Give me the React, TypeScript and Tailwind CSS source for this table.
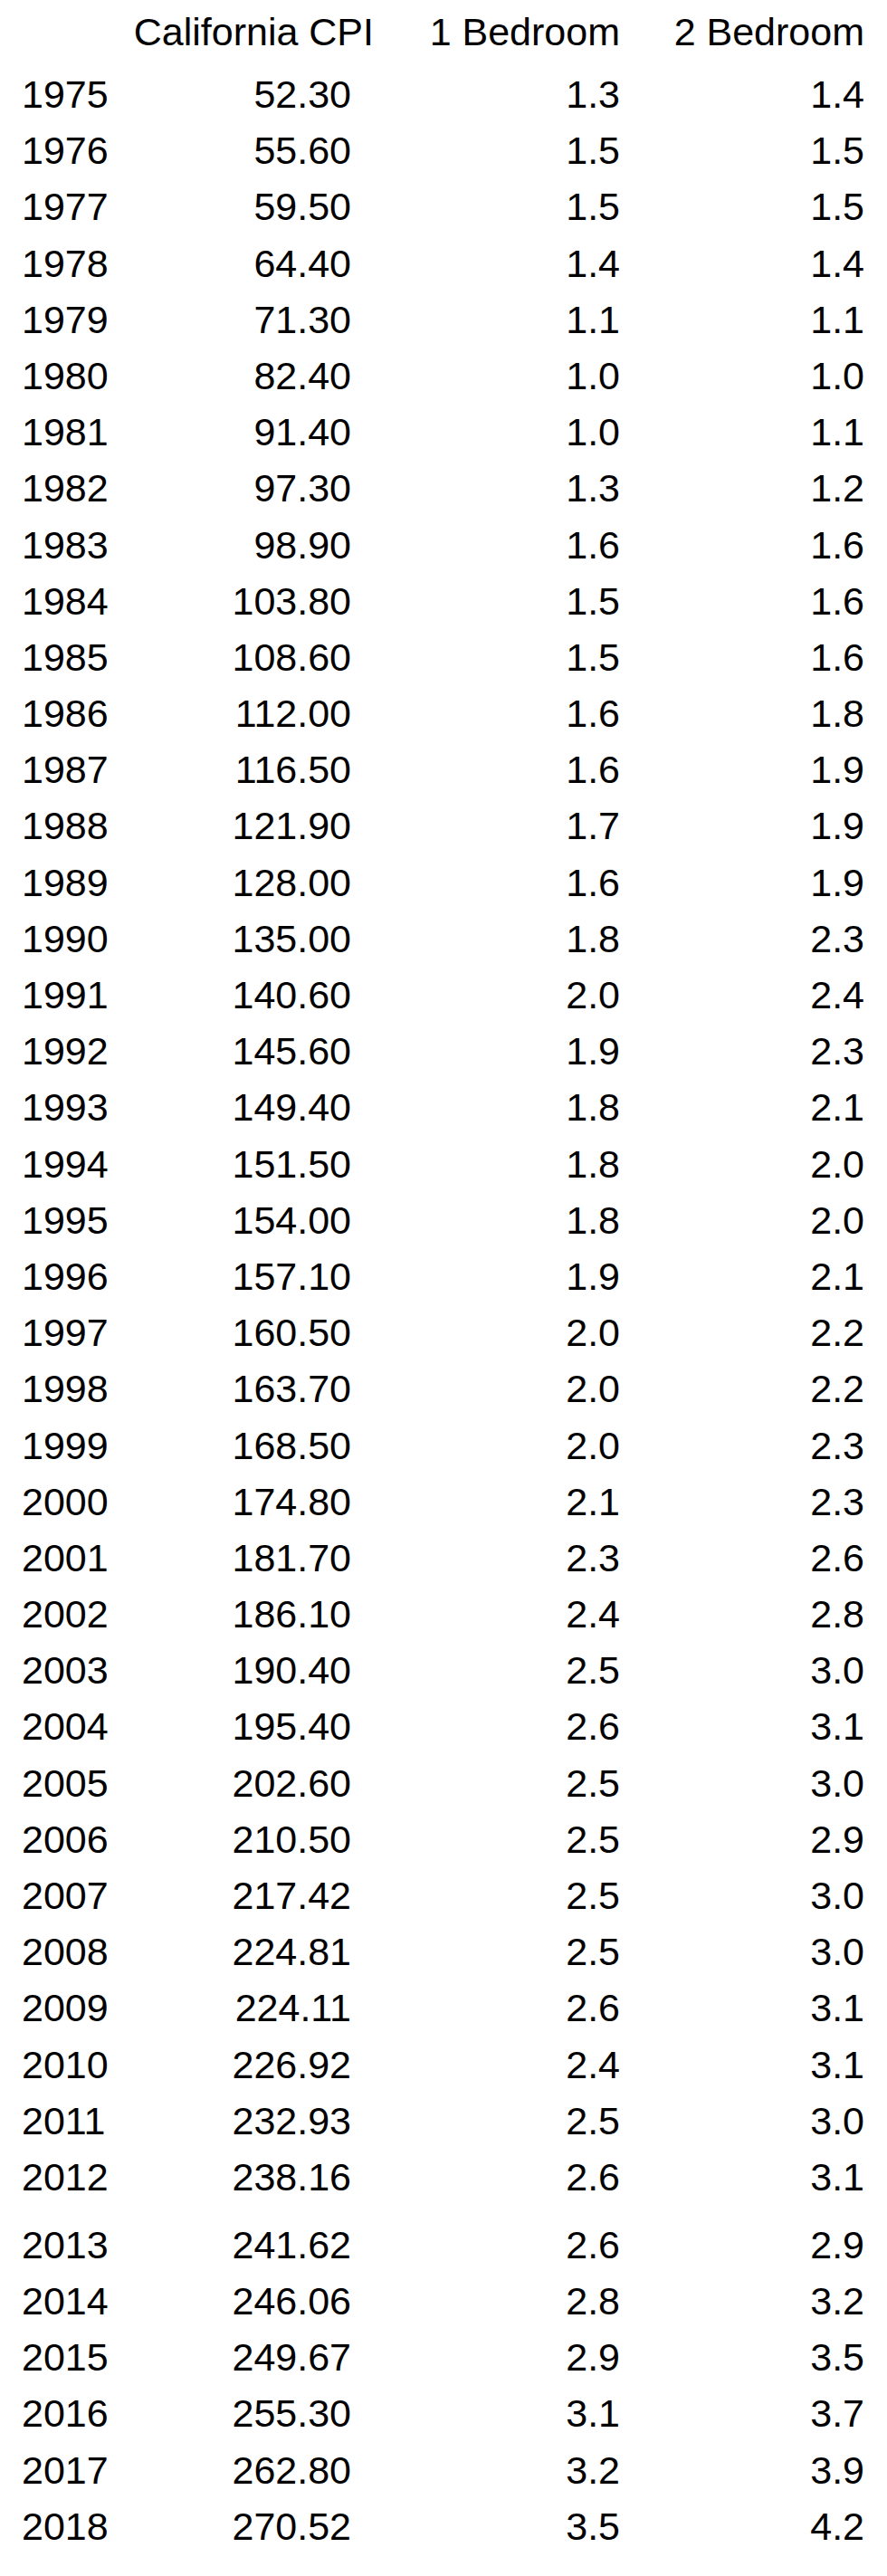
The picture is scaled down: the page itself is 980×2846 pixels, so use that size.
const rows: [string, string, string, string][] = [
  ["1975", "52.30", "1.3", "1.4"],
  ["1976", "55.60", "1.5", "1.5"],
  ["1977", "59.50", "1.5", "1.5"],
  ["1978", "64.40", "1.4", "1.4"],
  ["1979", "71.30", "1.1", "1.1"],
  ["1980", "82.40", "1.0", "1.0"],
  ["1981", "91.40", "1.0", "1.1"],
  ["1982", "97.30", "1.3", "1.2"],
  ["1983", "98.90", "1.6", "1.6"],
  ["1984", "103.80", "1.5", "1.6"],
  ["1985", "108.60", "1.5", "1.6"],
  ["1986", "112.00", "1.6", "1.8"],
  ["1987", "116.50", "1.6", "1.9"],
  ["1988", "121.90", "1.7", "1.9"],
  ["1989", "128.00", "1.6", "1.9"],
  ["1990", "135.00", "1.8", "2.3"],
  ["1991", "140.60", "2.0", "2.4"],
  ["1992", "145.60", "1.9", "2.3"],
  ["1993", "149.40", "1.8", "2.1"],
  ["1994", "151.50", "1.8", "2.0"],
  ["1995", "154.00", "1.8", "2.0"],
  ["1996", "157.10", "1.9", "2.1"],
  ["1997", "160.50", "2.0", "2.2"],
  ["1998", "163.70", "2.0", "2.2"],
  ["1999", "168.50", "2.0", "2.3"],
  ["2000", "174.80", "2.1", "2.3"],
  ["2001", "181.70", "2.3", "2.6"],
  ["2002", "186.10", "2.4", "2.8"],
  ["2003", "190.40", "2.5", "3.0"],
  ["2004", "195.40", "2.6", "3.1"],
  ["2005", "202.60", "2.5", "3.0"],
  ["2006", "210.50", "2.5", "2.9"],
  ["2007", "217.42", "2.5", "3.0"],
  ["2008", "224.81", "2.5", "3.0"],
  ["2009", "224.11", "2.6", "3.1"],
  ["2010", "226.92", "2.4", "3.1"],
  ["2011", "232.93", "2.5", "3.0"],
  ["2012", "238.16", "2.6", "3.1"],
  ["2013", "241.62", "2.6", "2.9"],
  ["2014", "246.06", "2.8", "3.2"],
  ["2015", "249.67", "2.9", "3.5"],
  ["2016", "255.30", "3.1", "3.7"],
  ["2017", "262.80", "3.2", "3.9"],
  ["2018", "270.52", "3.5", "4.2"],
];

const cols = "grid grid-cols-[120px_244px_297px_270px]";

const App = () => {
  return (
    <div
      className="min-h-[2846px] w-[980px] bg-white pl-[24px] pt-[4px] text-[43px] text-black"
      style={{ fontFamily: '"Liberation Sans", Arial, sans-serif' }}
    >
      <div className={`${cols} h-[69px] leading-[62px]`}>
        <div />
        <div className="-mr-[25px] text-right whitespace-nowrap">California CPI</div>
        <div className="text-right whitespace-nowrap">1 Bedroom</div>
        <div className="text-right whitespace-nowrap">2 Bedroom</div>
      </div>

      {rows.map((r) => (
        <div
          key={r[0]}
          className={`${cols} h-[62.2px] leading-[62.2px] ${r[0] === "2013" ? "mt-[12.8px]" : ""}`}
        >
          <div>{r[0]}</div>
          <div className="text-right">{r[1]}</div>
          <div className="text-right">{r[2]}</div>
          <div className="text-right">{r[3]}</div>
        </div>
      ))}
    </div>
  );
};

export default App;
